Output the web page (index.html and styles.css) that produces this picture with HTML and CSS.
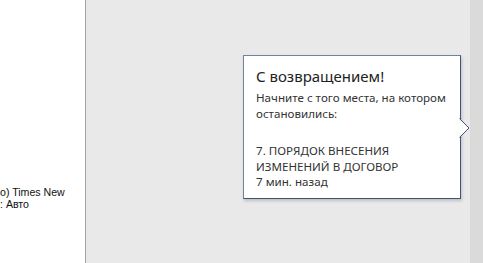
FILE: index.html
```html
<!DOCTYPE html>
<html lang="ru">
<head>
<meta charset="utf-8">
<link rel="stylesheet" href="styles.css">
</head>
<body>
<div class="page">
  <aside class="left">
    <div class="props">
      <div class="prop-line">o) Times New</div>
      <div class="prop-line">: Авто</div>
    </div>
  </aside>
  <main class="main">
    <div class="popup">
      <div class="title">С возвращением!</div>
      <div class="body">Начните с того места, на котором остановились:</div>
      <div class="section">7. ПОРЯДОК ВНЕСЕНИЯ ИЗМЕНЕНИЙ В ДОГОВОР</div>
      <div class="time">7 мин. назад</div>
      <svg class="arrow" width="12" height="22" viewBox="0 0 12 22"><polygon points="0,1.5 9.5,11 0,20.5" fill="#fff"/><polyline points="0.5,1.5 10,11 0.5,20.5" fill="none" stroke="#3c5478" stroke-width="1"/></svg>
    </div>
  </main>
  <div class="strip"></div>
</div>
</body>
</html>
```
FILE: styles.css
```css
html, body {
  margin: 0;
  padding: 0;
}
body {
  width: 483px;
  height: 263px;
  overflow: hidden;
}
.page {
  display: flex;
  height: 263px;
}
.left {
  width: 85px;
  flex: none;
  background: #ffffff;
  border-right: 1px solid #a4a4a4;
  overflow: hidden;
  padding-top: 186px;
  box-sizing: content-box;
}
.props {
  font-family: "Liberation Sans", Arial, sans-serif;
  font-size: 10.6px;
  line-height: 12px;
  color: #111;
  white-space: nowrap;
}
.main {
  flex: 1;
  background: #e9e9e9;
  padding-top: 55px;
  padding-left: 157px;
}
.strip {
  width: 13px;
  flex: none;
  background: #dadada;
}
.popup {
  position: relative;
  width: 203px;
  height: 126px;
  background: #fff;
  border: 1px solid #3c5478;
  border-top-color: #6f82a0;
  border-left-color: #6f82a0;
  box-shadow: 1px 2px 3px rgba(0,0,0,0.18);
  padding: 9px 1px 7px 12px;
  font-family: "Noto Sans", "Open Sans", sans-serif;
  color: #333;
}
.title {
  font-size: 15px;
  line-height: 22px;
  color: #222;
  margin-bottom: 3px;
}
.body, .section, .time {
  font-size: 11.6px;
  line-height: 16px;
}
.body {
  margin-bottom: 21px;
}
.time {
  margin-top: -1px;
}
.arrow {
  position: absolute;
  right: -11px;
  top: 61px;
}
```
